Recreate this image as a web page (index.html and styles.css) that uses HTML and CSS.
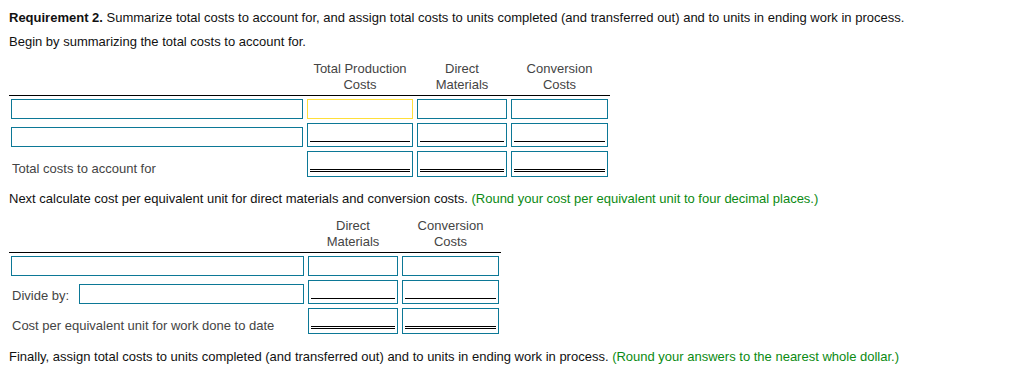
FILE: index.html
```html
<!DOCTYPE html>
<html>
<head>
<meta charset="utf-8">
<link rel="stylesheet" href="styles.css">
</head>
<body>
<div class="page">
  <p class="line first"><b>Requirement 2.</b> Summarize total costs to account for, and assign total costs to units completed (and transferred out) and to units in ending work in process.</p>
  <p class="line second">Begin by summarizing the total costs to account for.</p>

  <div class="tbl t1">
    <div class="thead">
      <div></div>
      <div class="th">Total Production<br>Costs</div>
      <div class="th">Direct<br>Materials</div>
      <div class="th">Conversion<br>Costs</div>
    </div>
    <div class="tbody">
      <div class="box"></div>
      <div class="box active"></div>
      <div class="box"></div>
      <div class="box"></div>

      <div class="box"></div>
      <div class="box single"><div class="rule"></div></div>
      <div class="box single"><div class="rule"></div></div>
      <div class="box single"><div class="rule"></div></div>

      <div class="label">Total costs to account for</div>
      <div class="box double"><div class="rule"></div></div>
      <div class="box double"><div class="rule"></div></div>
      <div class="box double"><div class="rule"></div></div>
    </div>
  </div>

  <p class="line third">Next calculate cost per equivalent unit for direct materials and conversion costs. <span class="hint">(Round your cost per equivalent unit to four decimal places.)</span></p>

  <div class="tbl t2">
    <div class="thead">
      <div></div>
      <div class="th">Direct<br>Materials</div>
      <div class="th">Conversion<br>Costs</div>
    </div>
    <div class="tbody">
      <div class="box"></div>
      <div class="box"></div>
      <div class="box"></div>

      <div class="divide">
        <span class="label">Divide by:</span>
        <div class="box grow"></div>
      </div>
      <div class="box single"><div class="rule"></div></div>
      <div class="box single"><div class="rule"></div></div>

      <div class="label">Cost per equivalent unit for work done to date</div>
      <div class="box double"><div class="rule"></div></div>
      <div class="box double"><div class="rule"></div></div>
    </div>
  </div>

  <p class="line fourth">Finally, assign total costs to units completed (and transferred out) and to units in ending work in process. <span class="hint">(Round your answers to the nearest whole dollar.)</span></p>
</div>
</body>
</html>
```

FILE: styles.css
```css
html, body {
  margin: 0;
  padding: 0;
  background: #ffffff;
}

body {
  font-family: "Liberation Sans", Arial, sans-serif;
  font-size: 13px;
  line-height: 16px;
  color: #111111;
}

.page {
  padding: 10px 0 0 9px;
}

.line {
  margin: 0;
}

.second {
  margin-top: 8px;
}

.hint {
  color: #0b8a12;
}

.tbl {
  width: fit-content;
}

.t1 {
  margin-top: 11px;
}

.t2 {
  margin-top: 11px;
}

.third {
  margin-top: 14px;
}

.fourth {
  margin-top: 15px;
}

.thead,
.tbody {
  display: grid;
  column-gap: 4px;
  padding: 0 2px;
}

.t1 .thead,
.t1 .tbody {
  grid-template-columns: 292px 106px 90px 97px;
}

.t2 .thead,
.t2 .tbody {
  grid-template-columns: 293px 90px 97px;
}

.thead {
  padding-bottom: 2px;
  border-bottom: 1px solid #000000;
}

.th {
  text-align: center;
  color: #444444;
}

.tbody {
  padding-top: 3px;
  row-gap: 4px;
  align-items: end;
}

.box {
  box-sizing: border-box;
  height: 20px;
  border: 1px solid #0c7896;
  background: #ffffff;
}

.box.active {
  border-color: #ffdf3a;
}

.box.single,
.box.double {
  display: flex;
  align-items: flex-end;
  padding: 0 2px 4px;
}

.box.single {
  height: 24px;
}

.box.double {
  height: 26px;
}

.rule {
  flex: 1;
}

.single .rule {
  border-bottom: 1px solid #000000;
}

.double .rule {
  border-bottom: 3px double #000000;
}

.label {
  color: #444444;
  padding-left: 1px;
}

.divide {
  display: flex;
  align-items: flex-end;
}

.divide .label {
  width: 67px;
  flex: none;
}

.box.grow {
  flex: 1;
}
```
